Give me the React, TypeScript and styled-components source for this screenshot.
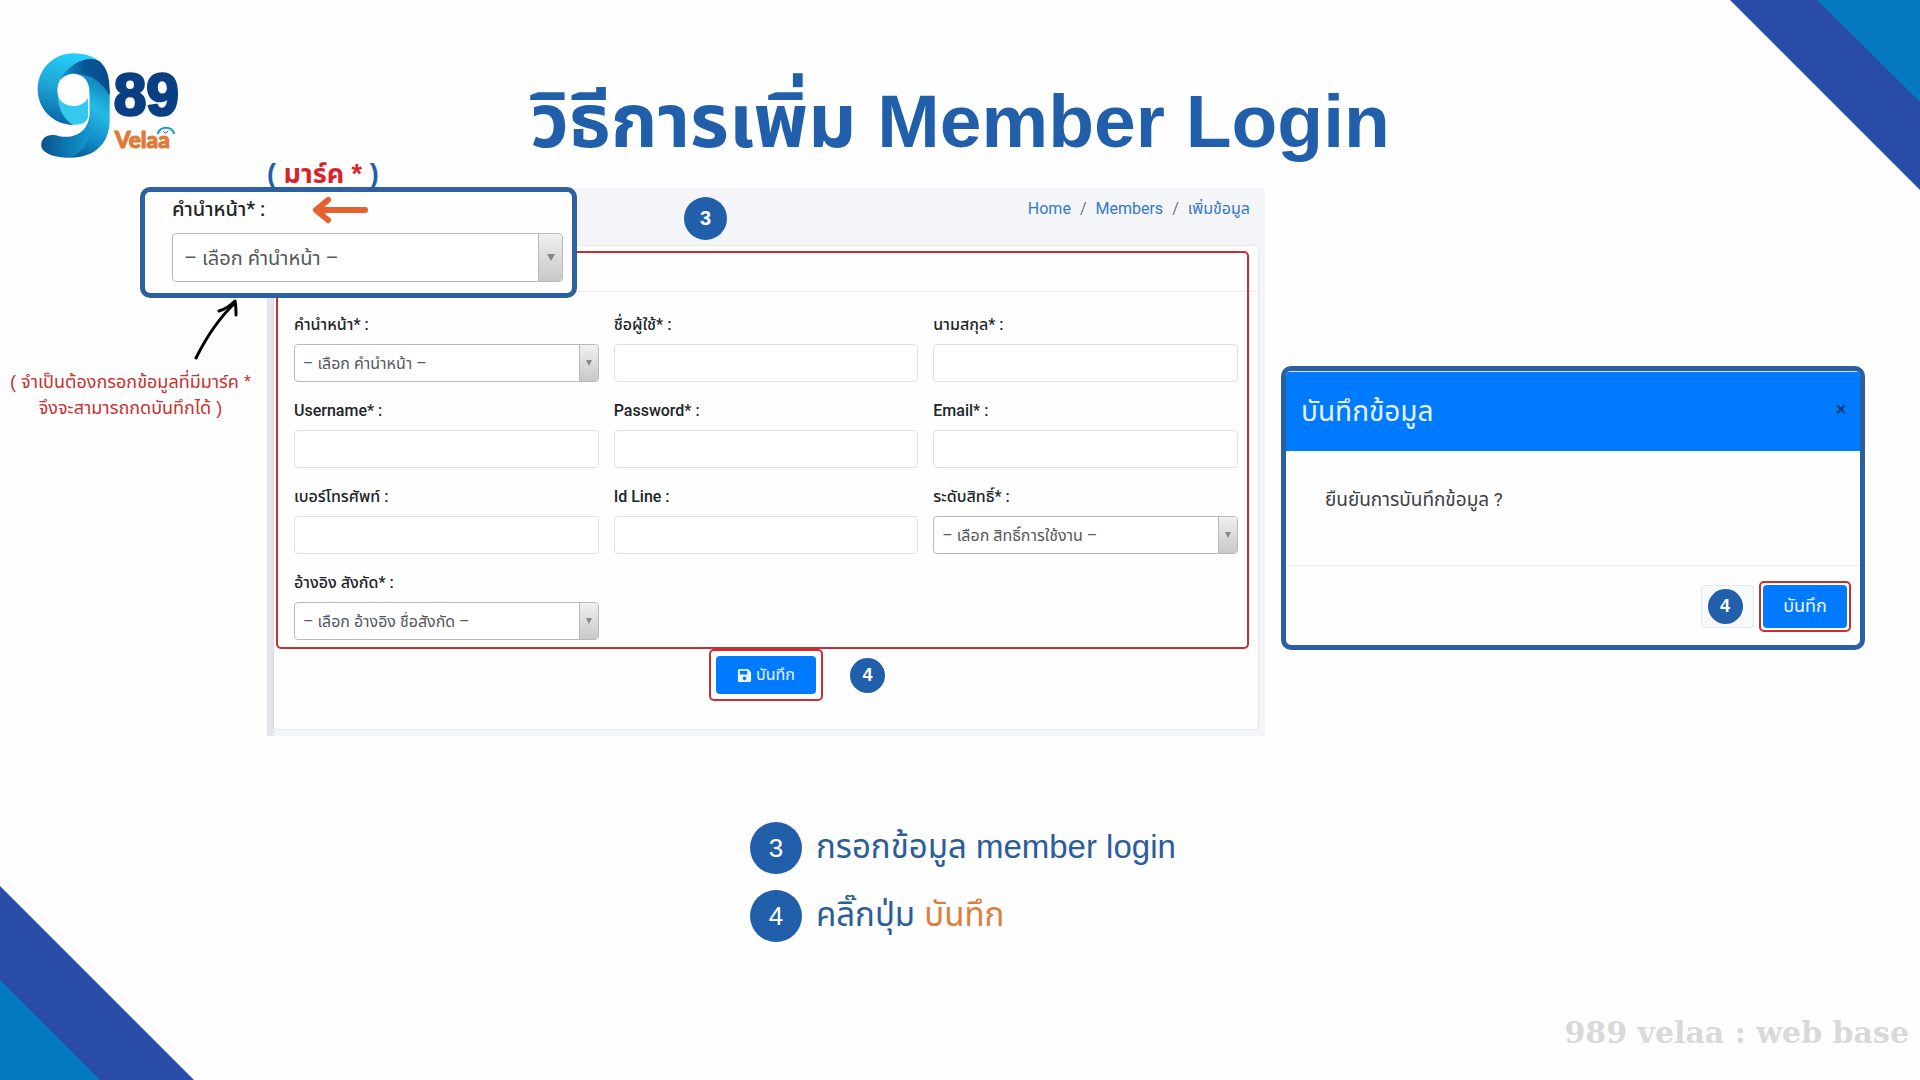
import React from "react";
import styled, { createGlobalStyle } from "styled-components";
import { FaSave } from "react-icons/fa";

const blue = "#225fab";
const primary = "#007bff";
const uiFont = `Roboto, "Noto Sans Thai", "Noto Sans", sans-serif`;
const slideFont = `"Liberation Sans", "Noto Sans Thai", sans-serif`;

const GlobalStyle = createGlobalStyle`
  *, *::before, *::after { box-sizing: border-box; }
  body { margin: 0; background: #fefefe; font-family: ${slideFont}; }
  button, input, select { font: inherit; }
`;

const Slide = styled.main`
  position: relative;
  display: flex;
  flex-direction: column;
  min-height: 100vh;
  overflow: hidden;
`;

const Corner = styled.svg<{ $place: "top" | "bottom" }>`
  position: absolute;
  width: 194px;
  height: 194px;
  ${(p) => (p.$place === "top" ? "top: 0; right: 0;" : "bottom: 0; left: 0;")}
`;

const Header = styled.header`
  display: grid;
  grid-template-columns: 200px 1fr 200px;
  align-items: start;
  height: 188px;
`;

const Logo = styled.svg`
  width: 180px;
  height: 130px;
  margin: 40px 0 0 20px;
`;

const Title = styled.h1`
  margin: 73px 0 0;
  color: ${blue};
  font-size: 75px;
  line-height: 96px;
  font-weight: 700;
  text-align: center;
  white-space: nowrap;
`;

const Stage = styled.section`
  display: grid;
  grid-template-columns: 251px minmax(0, 1fr) 584px;
  column-gap: 16px;
  padding-right: 55px;
  align-items: start;
`;

const Aside = styled.aside`
  display: flex;
  flex-direction: column;
  align-items: center;
  padding: 109px 0 0 10px;
`;

const NoteArrow = styled.svg`
  width: 48px;
  height: 66px;
  margin-left: 182px;
  align-self: flex-start;
`;

const Note = styled.p`
  margin: 6px 0 0;
  color: #c9302f;
  font-size: 18px;
  line-height: 26px;
  text-align: center;
  white-space: nowrap;
`;

const Panel = styled.div`
  position: relative;
  padding: 0 7px 7px;
  background: #f3f5f9;
  box-shadow: inset 7px 0 0 #e5e6ec;
  font-family: ${uiFont};
`;

const Breadcrumb = styled.nav`
  display: flex;
  justify-content: flex-end;
  gap: 9px;
  height: 58px;
  padding: 9px 8px 0 0;
  color: #6c757d;
  font-size: 16px;
  line-height: 24px;
`;

const Crumb = styled.a`
  color: #3478c9;
  text-decoration: none;
`;

const Card = styled.form`
  position: relative;
  padding-bottom: 35px;
  border-radius: 4px;
  background: #fefefe;
  box-shadow: 0 0 2px rgba(0, 0, 0, 0.2);
`;

const CardHead = styled.div`
  height: 46px;
  border-bottom: 1px solid #ebedef;
`;

const Fields = styled.div`
  display: grid;
  grid-template-columns: repeat(3, minmax(0, 1fr));
  gap: 16px 15px;
  padding: 20px 20px 16px;
`;

const Field = styled.div<{ $large?: boolean }>`
  display: flex;
  flex-direction: column;
  gap: ${(p) => (p.$large ? "11px" : "6px")};
  font-size: ${(p) => (p.$large ? "20px" : "16px")};
`;

const Label = styled.label`
  color: #212529;
  font-weight: 500;
  line-height: 26px;
`;

const Input = styled.input`
  width: 100%;
  height: 38px;
  padding: 0 9px;
  border: 1px solid #dfe1e4;
  border-radius: 4px;
  background: #fff;
`;

const SelectFrame = styled.div<{ $large?: boolean }>`
  position: relative;
  height: ${(p) => (p.$large ? "49px" : "38px")};
  border: 1px solid #b9babc;
  border-radius: 4px;
  overflow: hidden;
  background: #fff;
`;

const Select = styled.select<{ $large?: boolean }>`
  width: 100%;
  height: 100%;
  padding: 0 ${(p) => (p.$large ? "11px" : "8px")};
  border: 0;
  appearance: none;
  background: transparent;
  color: #55585c;
`;

const SelectArrow = styled.span<{ $large?: boolean }>`
  position: absolute;
  inset: 0 0 0 auto;
  display: grid;
  place-items: center;
  width: ${(p) => (p.$large ? "24px" : "19px")};
  border-left: 1px solid #b9babc;
  background: linear-gradient(#f0f0f0, #c8c8c8);
  pointer-events: none;

  &::after {
    content: "";
    border: ${(p) => (p.$large ? "4px" : "3px")} solid transparent;
    border-top: ${(p) => (p.$large ? "7px" : "6px")} solid #85878a;
    border-bottom: 0;
  }
`;

const Actions = styled.div`
  position: relative;
  display: flex;
  justify-content: center;
`;

const Ring = styled.span<{ $gap: number }>`
  position: absolute;
  inset: -${(p) => p.$gap}px;
  border: 2px solid #c53034;
  border-radius: 5px;
  pointer-events: none;
`;

const FormRing = styled(Ring)`
  inset: 5px 9px 80px 2px;
`;

const SaveButton = styled.button<{ $large?: boolean }>`
  position: relative;
  display: flex;
  align-items: center;
  justify-content: center;
  gap: 4px;
  width: ${(p) => (p.$large ? "84px" : "100px")};
  height: ${(p) => (p.$large ? "43px" : "38px")};
  padding: 0;
  border: 0;
  border-radius: 4px;
  background: ${primary};
  color: #eef6ff;
  font-size: ${(p) => (p.$large ? "18px" : "16px")};
`;

const Badge = styled.span<{ $size: number }>`
  display: grid;
  place-items: center;
  flex: none;
  width: ${(p) => p.$size}px;
  height: ${(p) => p.$size}px;
  border-radius: 50%;
  background: ${blue};
  color: #fff;
  font-family: ${slideFont};
  font-size: ${(p) => (p.$size > 50 ? 26 : p.$size > 40 ? 20 : 18)}px;
  font-weight: ${(p) => (p.$size > 50 ? 400 : 700)};
`;

const PanelBadge = styled(Badge)`
  position: absolute;
  top: 9px;
  left: 417px;
`;

const ActionBadge = styled(Badge)`
  position: absolute;
  top: 2px;
  left: calc(50% + 84px);
`;

const Callout = styled.div`
  position: absolute;
  top: -1px;
  left: -127px;
  width: 437px;
  height: 111px;
  padding: 4px 9px 0 27px;
  border: 5px solid #2d609f;
  border-radius: 10px;
  background: #fefefe;
`;

const CalloutArrow = styled.svg`
  position: absolute;
  top: 4px;
  left: 166px;
  width: 58px;
  height: 28px;
`;

const Mark = styled.strong`
  position: absolute;
  top: -32px;
  left: 0;
  color: ${blue};
  font-family: ${slideFont};
  font-size: 27px;
  line-height: 36px;
  white-space: nowrap;
`;

const Red = styled.span`
  color: #d8232a;
`;

const Dialog = styled.section`
  margin-top: 178px;
  border: 5px solid #2b5f9f;
  border-radius: 10px;
  background: #fefefe;
  overflow: hidden;
  font-family: ${uiFont};
`;

const DialogHead = styled.div`
  display: flex;
  align-items: center;
  justify-content: space-between;
  height: 80px;
  padding: 0 10px 0 15px;
  border-top: 1px solid #d4e6fb;
  background: ${primary};
`;

const DialogTitle = styled.h2`
  margin: 0;
  color: #e4f4ff;
  font-size: 28px;
  line-height: 40px;
  font-weight: 400;
`;

const Close = styled.button`
  width: 18px;
  height: 24px;
  margin-bottom: 6px;
  padding: 0;
  border: 0;
  background: none;
  color: #0b3f7d;
  font-size: 20px;
  line-height: 24px;
  font-weight: 700;
`;

const DialogBody = styled.p`
  height: 115px;
  margin: 0;
  padding: 36px 39px 0;
  border-bottom: 1px solid #e9ecef;
  color: #3c4146;
  font-size: 19px;
  line-height: 26px;
`;

const DialogFoot = styled.div`
  display: flex;
  justify-content: flex-end;
  gap: 9px;
  padding: 19px 13px 17px;
`;

const CancelButton = styled.button`
  display: grid;
  place-items: center;
  width: 53px;
  height: 43px;
  padding: 0 5px 0 0;
  border: 1px solid #e3e6ea;
  border-radius: 4px;
  background: #f8f9fa;
`;

const Steps = styled.ol`
  display: flex;
  flex-direction: column;
  gap: 16px;
  width: 420px;
  margin: 86px auto 0;
  padding: 0;
  list-style: none;
`;

const Step = styled.li`
  display: flex;
  align-items: center;
  gap: 14px;
  height: 52px;
  color: #2c5d9b;
  font-size: 33px;
  white-space: nowrap;
`;

const Orange = styled.span`
  color: #d9803f;
`;

const Footer = styled.footer`
  margin-top: auto;
  padding: 0 11px 27px 0;
  color: #d9d9d9;
  font-family: "DejaVu Serif", serif;
  font-size: 30px;
  line-height: 40px;
  font-weight: 700;
  text-align: right;
`;

type FieldSpec = { id: string; label: string; option?: string };

const fields: FieldSpec[] = [
  { id: "prefix", label: "คำนำหน้า* :", option: "– เลือก คำนำหน้า –" },
  { id: "first", label: "ชื่อผู้ใช้* :" },
  { id: "last", label: "นามสกุล* :" },
  { id: "username", label: "Username* :" },
  { id: "password", label: "Password* :" },
  { id: "email", label: "Email* :" },
  { id: "phone", label: "เบอร์โทรศัพท์ :" },
  { id: "line", label: "Id Line :" },
  { id: "role", label: "ระดับสิทธิ์* :", option: "– เลือก สิทธิ์การใช้งาน –" },
  { id: "org", label: "อ้างอิง สังกัด* :", option: "– เลือก อ้างอิง ชื่อสังกัด –" },
];

function FormField({ id, label, option, large }: FieldSpec & { large?: boolean }) {
  return (
    <Field $large={large}>
      <Label htmlFor={id}>{label}</Label>
      {option ? (
        <SelectFrame $large={large}>
          <Select id={id} $large={large}>
            <option>{option}</option>
          </Select>
          <SelectArrow $large={large} />
        </SelectFrame>
      ) : (
        <Input id={id} type={id === "password" ? "password" : "text"} />
      )}
    </Field>
  );
}

function BrandLogo() {
  return (
    <Logo viewBox="0 0 540 390" role="img" aria-label="989 Velaa">
      <defs>
        <linearGradient id="ringFill" x1="0.6" y1="0" x2="0.4" y2="1">
          <stop offset="0" stopColor="#25d0fb" />
          <stop offset="0.5" stopColor="#1fa5d6" />
          <stop offset="1" stopColor="#0767a6" />
        </linearGradient>
        <linearGradient id="stemFill" x1="0.7" y1="0" x2="0.4" y2="1">
          <stop offset="0" stopColor="#0a78b8" />
          <stop offset="0.4" stopColor="#25bbe6" />
          <stop offset="0.75" stopColor="#108bc6" />
          <stop offset="1" stopColor="#0a5f9f" />
        </linearGradient>
        <linearGradient id="foldFill" x1="0" y1="0.5" x2="1" y2="0.4">
          <stop offset="0" stopColor="#149bd0" />
          <stop offset="0.5" stopColor="#075897" />
          <stop offset="1" stopColor="#0a4a8a" />
        </linearGradient>
        <linearGradient id="tailFill" x1="0" y1="0" x2="1" y2="0">
          <stop offset="0" stopColor="#07528f" />
          <stop offset="1" stopColor="#129bd2" />
        </linearGradient>
      </defs>
      <path
        fill="url(#stemFill)"
        d="M128 108C165 80 225 88 269 150V240C269 310 225 353 150 353C175 330 207 290 208 235V150C203 112 160 92 128 108Z"
      />
      <path
        fill="url(#tailFill)"
        d="M208 225C206 275 160 302 108 286C82 280 62 295 64 318C67 342 110 354 150 353C195 335 222 290 208 225Z"
      />
      <path
        fill="url(#ringFill)"
        d="M248 72C228 52 195 40 161 40C100 40 53 88 53 148C53 206 98 254 160 255C132 235 118 205 113 160C108 110 150 75 248 72Z"
      />
      <path fill="url(#foldFill)" d="M120 118C150 68 205 44 238 64C262 84 270 112 269 166C235 108 185 86 120 118Z" />
      <circle cx="160" cy="148" r="47" fill="#fefefe" />
      <path fill="#35c9ee" d="M113 165C122 190 140 198 165 198C185 196 198 186 204 174V236C195 250 178 255 160 254C130 240 113 200 113 165Z" />
      <path d="M206 160V232C204 246 190 256 170 258" fill="none" stroke="#fefefe" strokeWidth="4" />
      <text
        x="281"
        y="226"
        fill="#0a3f84"
        stroke="#0a3f84"
        strokeWidth="8"
        strokeLinejoin="round"
        fontFamily="'Liberation Sans', sans-serif"
        fontSize="176"
        fontWeight="700"
      >
        89
      </text>
      <text
        x="284"
        y="323"
        fill="#e17a37"
        stroke="#e17a37"
        strokeWidth="3"
        fontFamily="Lato, sans-serif"
        fontSize="68"
        fontWeight="900"
      >
        Velaa
      </text>
      <path d="M413 282A26 26 0 0 1 463 282" fill="none" stroke="#1c9ccb" strokeWidth="6" />
      <path d="M431 274L436 280L445 272" fill="none" stroke="#1f4f82" strokeWidth="3" />
    </Logo>
  );
}

export default function App() {
  return (
    <Slide>
      <GlobalStyle />
      <Corner $place="top" viewBox="0 0 194 194" aria-hidden="true">
        <path d="M4 0H194V190Z" fill="#294ca9" />
        <path d="M91 0H194V102Z" fill="#037abf" />
      </Corner>
      <Corner $place="bottom" viewBox="0 0 194 194" aria-hidden="true">
        <path d="M0 0V194H194Z" fill="#294ca9" />
        <path d="M0 94V194H100Z" fill="#037abf" />
      </Corner>

      <Header>
        <BrandLogo />
        <Title>วิธีการเพิ่ม Member Login</Title>
      </Header>

      <Stage>
        <Aside>
          <NoteArrow viewBox="0 0 48 66" fill="none" stroke="#000" strokeWidth="3" strokeLinecap="round" strokeLinejoin="round" aria-hidden="true">
            <path d="M4 61C14 41 28 20 43 6" />
            <path d="M27 14C34 12 39 8 43 4C44 9 44 14 44 18" />
          </NoteArrow>
          <Note>
            ( จำเป็นต้องกรอกข้อมูลที่มีมาร์ค *
            <br />
            จึงจะสามารถกดบันทึกได้ )
          </Note>
        </Aside>

        <Panel>
          <Breadcrumb aria-label="breadcrumb">
            <Crumb href="#home">Home</Crumb>/<Crumb href="#members">Members</Crumb>/<Crumb href="#add">เพิ่มข้อมูล</Crumb>
          </Breadcrumb>
          <Card>
            <CardHead />
            <Fields>
              {fields.map((f) => (
                <FormField key={f.id} {...f} />
              ))}
            </Fields>
            <Actions>
              <SaveButton type="button">
                <FaSave size={15} />
                บันทึก
                <Ring $gap={7} />
              </SaveButton>
              <ActionBadge $size={35}>4</ActionBadge>
            </Actions>
            <FormRing $gap={0} />
          </Card>
          <PanelBadge $size={43}>3</PanelBadge>
          <Mark>
            ( <Red>มาร์ค *</Red> )
          </Mark>
          <Callout>
            <FormField id="prefix-zoom" label="คำนำหน้า* :" option="– เลือก คำนำหน้า –" large />
            <CalloutArrow viewBox="0 0 58 28" fill="none" stroke="#e5612d" strokeWidth="6" strokeLinecap="round" strokeLinejoin="round" aria-hidden="true">
              <path d="M54 14H5M17 4L5 14L17 24" />
            </CalloutArrow>
          </Callout>
        </Panel>

        <Dialog aria-label="บันทึกข้อมูล">
          <DialogHead>
            <DialogTitle>บันทึกข้อมูล</DialogTitle>
            <Close type="button" aria-label="Close">×</Close>
          </DialogHead>
          <DialogBody>ยืนยันการบันทึกข้อมูล ?</DialogBody>
          <DialogFoot>
            <CancelButton type="button">
              <Badge $size={35}>4</Badge>
            </CancelButton>
            <SaveButton type="button" $large>
              บันทึก
              <Ring $gap={4} />
            </SaveButton>
          </DialogFoot>
        </Dialog>
      </Stage>

      <Steps>
        <Step>
          <Badge $size={52}>3</Badge>
          <span>กรอกข้อมูล member login</span>
        </Step>
        <Step>
          <Badge $size={52}>4</Badge>
          <span>
            คลิ๊กปุ่ม <Orange>บันทึก</Orange>
          </span>
        </Step>
      </Steps>

      <Footer>989 velaa : web base</Footer>
    </Slide>
  );
}
